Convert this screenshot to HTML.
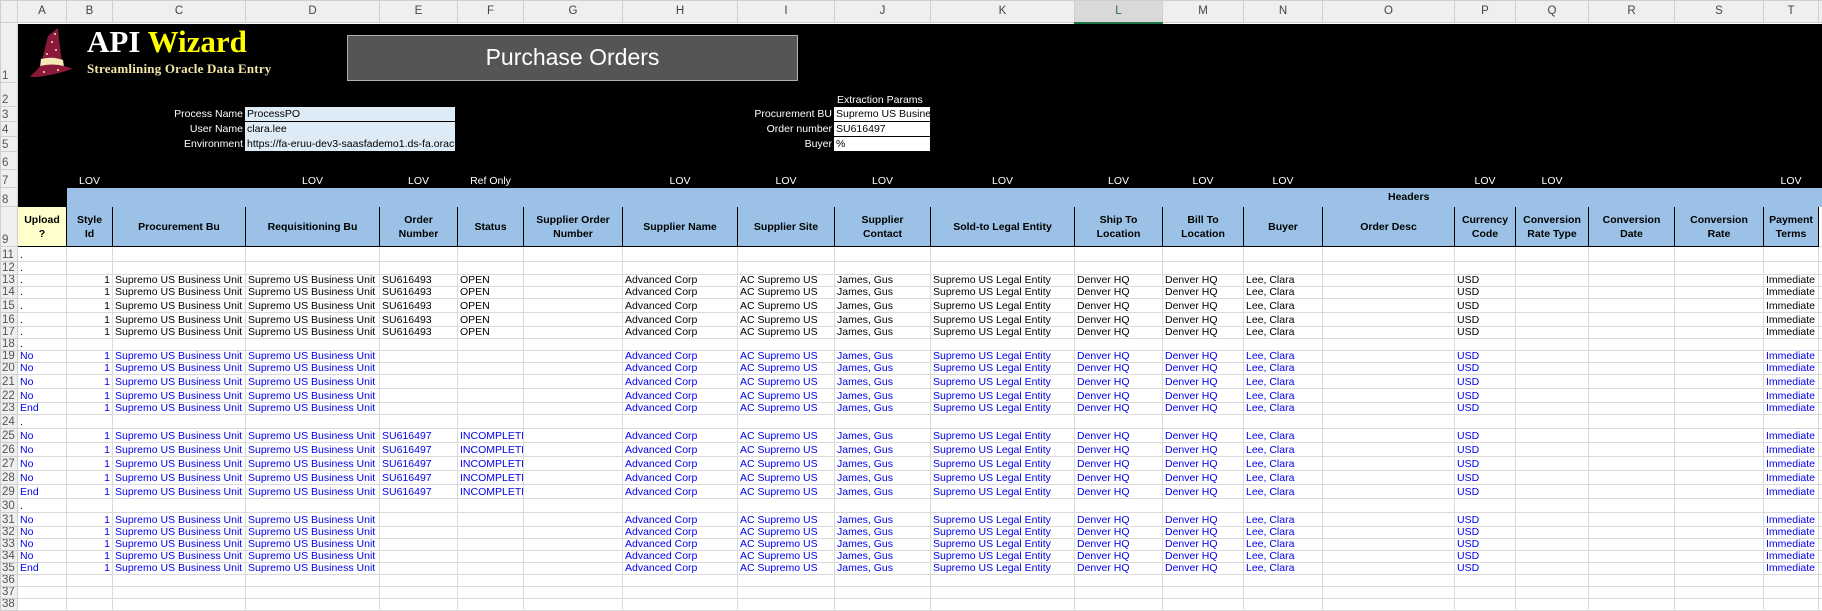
<!DOCTYPE html>
<html><head><meta charset="utf-8"><style>
*{margin:0;padding:0;box-sizing:border-box}
body{width:1822px;height:608px;overflow:hidden;background:#fff;font-family:"Liberation Sans",Arial,sans-serif;font-size:10.5px;position:relative}
table{border-collapse:collapse;table-layout:fixed;position:absolute;left:0;top:0;width:1822px}
td{border:1px solid #dadada;white-space:nowrap;overflow:hidden;padding:0 2px;vertical-align:bottom;line-height:11px;height:12px}
tr.ch td{background:#efefef;color:#444;text-align:center;vertical-align:middle;font-size:11.5px;border-color:#cfcfcf;height:22px}
td.rh{background:#efefef;color:#555;font-size:11.5px;padding:0 0 0 1px;text-align:left;border-color:#cfcfcf;line-height:11px}
td.k{background:#000;border-color:#000;color:#fff}
td.lv{text-align:center;color:#fff;background:#000;border-color:#000}
td.bl{background:#9bc2e6;border-color:#9bc2e6}
tr.h9 td.hd{background:#9bc2e6;border:1px solid #000;text-align:center;vertical-align:middle;font-weight:bold;white-space:nowrap;line-height:14px;font-size:10.5px;color:#000;padding:0}
tr.h9 td.up{background:#ffffcc}
td.r{text-align:right}
tr.bl td{color:#0000ee}
tr.bl td.rh{color:#555}
.ov{position:absolute}
</style></head><body>
<table>
<colgroup><col style="width:17px"><col style="width:49px"><col style="width:46px"><col style="width:133px"><col style="width:134px"><col style="width:78px"><col style="width:66px"><col style="width:99px"><col style="width:115px"><col style="width:97px"><col style="width:96px"><col style="width:144px"><col style="width:88px"><col style="width:81px"><col style="width:79px"><col style="width:132px"><col style="width:61px"><col style="width:73px"><col style="width:86px"><col style="width:89px"><col style="width:55px"><col style="width:4px"></colgroup>
<tr class="ch"><td></td><td>A</td><td>B</td><td>C</td><td>D</td><td>E</td><td>F</td><td>G</td><td>H</td><td>I</td><td>J</td><td>K</td><td style="background:#d9d9d9;border-bottom:2px solid #217346;color:#217346">L</td><td>M</td><td>N</td><td>O</td><td>P</td><td>Q</td><td>R</td><td>S</td><td>T</td><td></td></tr>
<tr><td class="rh" style="height:60px">1</td><td class="k" colspan="21"></td></tr>
<tr><td class="rh" style="height:24px">2</td><td class="k" colspan="21"></td></tr>
<tr><td class="rh" style="height:15px">3</td><td class="k" colspan="21"></td></tr>
<tr><td class="rh" style="height:15px">4</td><td class="k" colspan="21"></td></tr>
<tr><td class="rh" style="height:15px">5</td><td class="k" colspan="21"></td></tr>
<tr><td class="rh" style="height:18px">6</td><td class="k" colspan="21"></td></tr>
<tr><td class="rh" style="height:18px">7</td><td class="k"></td><td class="lv">LOV</td><td class="k"></td><td class="lv">LOV</td><td class="lv">LOV</td><td class="lv">Ref Only</td><td class="k"></td><td class="lv">LOV</td><td class="lv">LOV</td><td class="lv">LOV</td><td class="lv">LOV</td><td class="lv">LOV</td><td class="lv">LOV</td><td class="lv">LOV</td><td class="k"></td><td class="lv">LOV</td><td class="lv">LOV</td><td class="k"></td><td class="k"></td><td class="lv">LOV</td><td class="k"></td></tr>
<tr><td class="rh" style="height:19px">8</td><td class="k"></td><td class="bl" colspan="20" style="font-weight:bold;padding-left:1321px;color:#000;vertical-align:middle">Headers</td></tr>
<tr class="h9"><td class="rh" style="height:40px">9</td><td class="hd up">Upload<br>?</td><td class="hd">Style<br>Id</td><td class="hd">Procurement Bu</td><td class="hd">Requisitioning Bu</td><td class="hd">Order<br>Number</td><td class="hd">Status</td><td class="hd">Supplier Order<br>Number</td><td class="hd">Supplier Name</td><td class="hd">Supplier Site</td><td class="hd">Supplier<br>Contact</td><td class="hd">Sold-to Legal Entity</td><td class="hd">Ship To<br>Location</td><td class="hd">Bill To<br>Location</td><td class="hd">Buyer</td><td class="hd">Order Desc</td><td class="hd">Currency<br>Code</td><td class="hd">Conversion<br>Rate Type</td><td class="hd">Conversion<br>Date</td><td class="hd">Conversion<br>Rate</td><td class="hd">Payment<br>Terms</td><td></td></tr>
<tr><td class="rh" style="height:15px">11</td><td>.</td><td></td><td></td><td></td><td></td><td></td><td></td><td></td><td></td><td></td><td></td><td></td><td></td><td></td><td></td><td></td><td></td><td></td><td></td><td></td><td></td></tr>
<tr><td class="rh" style="height:13px">12</td><td>.</td><td></td><td></td><td></td><td></td><td></td><td></td><td></td><td></td><td></td><td></td><td></td><td></td><td></td><td></td><td></td><td></td><td></td><td></td><td></td><td></td></tr>
<tr><td class="rh">13</td><td>.</td><td class="r">1</td><td>Supremo US Business Unit</td><td>Supremo US Business Unit</td><td>SU616493</td><td>OPEN</td><td></td><td>Advanced Corp</td><td>AC Supremo US</td><td>James, Gus</td><td>Supremo US Legal Entity</td><td>Denver HQ</td><td>Denver HQ</td><td>Lee, Clara</td><td></td><td>USD</td><td></td><td></td><td></td><td>Immediate</td><td></td></tr>
<tr><td class="rh">14</td><td>.</td><td class="r">1</td><td>Supremo US Business Unit</td><td>Supremo US Business Unit</td><td>SU616493</td><td>OPEN</td><td></td><td>Advanced Corp</td><td>AC Supremo US</td><td>James, Gus</td><td>Supremo US Legal Entity</td><td>Denver HQ</td><td>Denver HQ</td><td>Lee, Clara</td><td></td><td>USD</td><td></td><td></td><td></td><td>Immediate</td><td></td></tr>
<tr><td class="rh" style="height:14px">15</td><td>.</td><td class="r">1</td><td>Supremo US Business Unit</td><td>Supremo US Business Unit</td><td>SU616493</td><td>OPEN</td><td></td><td>Advanced Corp</td><td>AC Supremo US</td><td>James, Gus</td><td>Supremo US Legal Entity</td><td>Denver HQ</td><td>Denver HQ</td><td>Lee, Clara</td><td></td><td>USD</td><td></td><td></td><td></td><td>Immediate</td><td></td></tr>
<tr><td class="rh" style="height:14px">16</td><td>.</td><td class="r">1</td><td>Supremo US Business Unit</td><td>Supremo US Business Unit</td><td>SU616493</td><td>OPEN</td><td></td><td>Advanced Corp</td><td>AC Supremo US</td><td>James, Gus</td><td>Supremo US Legal Entity</td><td>Denver HQ</td><td>Denver HQ</td><td>Lee, Clara</td><td></td><td>USD</td><td></td><td></td><td></td><td>Immediate</td><td></td></tr>
<tr><td class="rh">17</td><td>.</td><td class="r">1</td><td>Supremo US Business Unit</td><td>Supremo US Business Unit</td><td>SU616493</td><td>OPEN</td><td></td><td>Advanced Corp</td><td>AC Supremo US</td><td>James, Gus</td><td>Supremo US Legal Entity</td><td>Denver HQ</td><td>Denver HQ</td><td>Lee, Clara</td><td></td><td>USD</td><td></td><td></td><td></td><td>Immediate</td><td></td></tr>
<tr><td class="rh">18</td><td>.</td><td></td><td></td><td></td><td></td><td></td><td></td><td></td><td></td><td></td><td></td><td></td><td></td><td></td><td></td><td></td><td></td><td></td><td></td><td></td><td></td></tr>
<tr class="bl"><td class="rh">19</td><td>No</td><td class="r">1</td><td>Supremo US Business Unit</td><td>Supremo US Business Unit</td><td></td><td></td><td></td><td>Advanced Corp</td><td>AC Supremo US</td><td>James, Gus</td><td>Supremo US Legal Entity</td><td>Denver HQ</td><td>Denver HQ</td><td>Lee, Clara</td><td></td><td>USD</td><td></td><td></td><td></td><td>Immediate</td><td></td></tr>
<tr class="bl"><td class="rh">20</td><td>No</td><td class="r">1</td><td>Supremo US Business Unit</td><td>Supremo US Business Unit</td><td></td><td></td><td></td><td>Advanced Corp</td><td>AC Supremo US</td><td>James, Gus</td><td>Supremo US Legal Entity</td><td>Denver HQ</td><td>Denver HQ</td><td>Lee, Clara</td><td></td><td>USD</td><td></td><td></td><td></td><td>Immediate</td><td></td></tr>
<tr class="bl"><td class="rh" style="height:14px">21</td><td>No</td><td class="r">1</td><td>Supremo US Business Unit</td><td>Supremo US Business Unit</td><td></td><td></td><td></td><td>Advanced Corp</td><td>AC Supremo US</td><td>James, Gus</td><td>Supremo US Legal Entity</td><td>Denver HQ</td><td>Denver HQ</td><td>Lee, Clara</td><td></td><td>USD</td><td></td><td></td><td></td><td>Immediate</td><td></td></tr>
<tr class="bl"><td class="rh" style="height:14px">22</td><td>No</td><td class="r">1</td><td>Supremo US Business Unit</td><td>Supremo US Business Unit</td><td></td><td></td><td></td><td>Advanced Corp</td><td>AC Supremo US</td><td>James, Gus</td><td>Supremo US Legal Entity</td><td>Denver HQ</td><td>Denver HQ</td><td>Lee, Clara</td><td></td><td>USD</td><td></td><td></td><td></td><td>Immediate</td><td></td></tr>
<tr class="bl"><td class="rh">23</td><td>End</td><td class="r">1</td><td>Supremo US Business Unit</td><td>Supremo US Business Unit</td><td></td><td></td><td></td><td>Advanced Corp</td><td>AC Supremo US</td><td>James, Gus</td><td>Supremo US Legal Entity</td><td>Denver HQ</td><td>Denver HQ</td><td>Lee, Clara</td><td></td><td>USD</td><td></td><td></td><td></td><td>Immediate</td><td></td></tr>
<tr><td class="rh" style="height:14px">24</td><td>.</td><td></td><td></td><td></td><td></td><td></td><td></td><td></td><td></td><td></td><td></td><td></td><td></td><td></td><td></td><td></td><td></td><td></td><td></td><td></td><td></td></tr>
<tr class="bl"><td class="rh" style="height:14px">25</td><td>No</td><td class="r">1</td><td>Supremo US Business Unit</td><td>Supremo US Business Unit</td><td>SU616497</td><td>INCOMPLETE</td><td></td><td>Advanced Corp</td><td>AC Supremo US</td><td>James, Gus</td><td>Supremo US Legal Entity</td><td>Denver HQ</td><td>Denver HQ</td><td>Lee, Clara</td><td></td><td>USD</td><td></td><td></td><td></td><td>Immediate</td><td></td></tr>
<tr class="bl"><td class="rh" style="height:14px">26</td><td>No</td><td class="r">1</td><td>Supremo US Business Unit</td><td>Supremo US Business Unit</td><td>SU616497</td><td>INCOMPLETE</td><td></td><td>Advanced Corp</td><td>AC Supremo US</td><td>James, Gus</td><td>Supremo US Legal Entity</td><td>Denver HQ</td><td>Denver HQ</td><td>Lee, Clara</td><td></td><td>USD</td><td></td><td></td><td></td><td>Immediate</td><td></td></tr>
<tr class="bl"><td class="rh" style="height:14px">27</td><td>No</td><td class="r">1</td><td>Supremo US Business Unit</td><td>Supremo US Business Unit</td><td>SU616497</td><td>INCOMPLETE</td><td></td><td>Advanced Corp</td><td>AC Supremo US</td><td>James, Gus</td><td>Supremo US Legal Entity</td><td>Denver HQ</td><td>Denver HQ</td><td>Lee, Clara</td><td></td><td>USD</td><td></td><td></td><td></td><td>Immediate</td><td></td></tr>
<tr class="bl"><td class="rh" style="height:14px">28</td><td>No</td><td class="r">1</td><td>Supremo US Business Unit</td><td>Supremo US Business Unit</td><td>SU616497</td><td>INCOMPLETE</td><td></td><td>Advanced Corp</td><td>AC Supremo US</td><td>James, Gus</td><td>Supremo US Legal Entity</td><td>Denver HQ</td><td>Denver HQ</td><td>Lee, Clara</td><td></td><td>USD</td><td></td><td></td><td></td><td>Immediate</td><td></td></tr>
<tr class="bl"><td class="rh" style="height:14px">29</td><td>End</td><td class="r">1</td><td>Supremo US Business Unit</td><td>Supremo US Business Unit</td><td>SU616497</td><td>INCOMPLETE</td><td></td><td>Advanced Corp</td><td>AC Supremo US</td><td>James, Gus</td><td>Supremo US Legal Entity</td><td>Denver HQ</td><td>Denver HQ</td><td>Lee, Clara</td><td></td><td>USD</td><td></td><td></td><td></td><td>Immediate</td><td></td></tr>
<tr><td class="rh" style="height:14px">30</td><td>.</td><td></td><td></td><td></td><td></td><td></td><td></td><td></td><td></td><td></td><td></td><td></td><td></td><td></td><td></td><td></td><td></td><td></td><td></td><td></td><td></td></tr>
<tr class="bl"><td class="rh" style="height:14px">31</td><td>No</td><td class="r">1</td><td>Supremo US Business Unit</td><td>Supremo US Business Unit</td><td></td><td></td><td></td><td>Advanced Corp</td><td>AC Supremo US</td><td>James, Gus</td><td>Supremo US Legal Entity</td><td>Denver HQ</td><td>Denver HQ</td><td>Lee, Clara</td><td></td><td>USD</td><td></td><td></td><td></td><td>Immediate</td><td></td></tr>
<tr class="bl"><td class="rh">32</td><td>No</td><td class="r">1</td><td>Supremo US Business Unit</td><td>Supremo US Business Unit</td><td></td><td></td><td></td><td>Advanced Corp</td><td>AC Supremo US</td><td>James, Gus</td><td>Supremo US Legal Entity</td><td>Denver HQ</td><td>Denver HQ</td><td>Lee, Clara</td><td></td><td>USD</td><td></td><td></td><td></td><td>Immediate</td><td></td></tr>
<tr class="bl"><td class="rh">33</td><td>No</td><td class="r">1</td><td>Supremo US Business Unit</td><td>Supremo US Business Unit</td><td></td><td></td><td></td><td>Advanced Corp</td><td>AC Supremo US</td><td>James, Gus</td><td>Supremo US Legal Entity</td><td>Denver HQ</td><td>Denver HQ</td><td>Lee, Clara</td><td></td><td>USD</td><td></td><td></td><td></td><td>Immediate</td><td></td></tr>
<tr class="bl"><td class="rh">34</td><td>No</td><td class="r">1</td><td>Supremo US Business Unit</td><td>Supremo US Business Unit</td><td></td><td></td><td></td><td>Advanced Corp</td><td>AC Supremo US</td><td>James, Gus</td><td>Supremo US Legal Entity</td><td>Denver HQ</td><td>Denver HQ</td><td>Lee, Clara</td><td></td><td>USD</td><td></td><td></td><td></td><td>Immediate</td><td></td></tr>
<tr class="bl"><td class="rh">35</td><td>End</td><td class="r">1</td><td>Supremo US Business Unit</td><td>Supremo US Business Unit</td><td></td><td></td><td></td><td>Advanced Corp</td><td>AC Supremo US</td><td>James, Gus</td><td>Supremo US Legal Entity</td><td>Denver HQ</td><td>Denver HQ</td><td>Lee, Clara</td><td></td><td>USD</td><td></td><td></td><td></td><td>Immediate</td><td></td></tr>
<tr><td class="rh">36</td><td></td><td></td><td></td><td></td><td></td><td></td><td></td><td></td><td></td><td></td><td></td><td></td><td></td><td></td><td></td><td></td><td></td><td></td><td></td><td></td><td></td></tr>
<tr><td class="rh">37</td><td></td><td></td><td></td><td></td><td></td><td></td><td></td><td></td><td></td><td></td><td></td><td></td><td></td><td></td><td></td><td></td><td></td><td></td><td></td><td></td><td></td></tr>
<tr><td class="rh">38</td><td></td><td></td><td></td><td></td><td></td><td></td><td></td><td></td><td></td><td></td><td></td><td></td><td></td><td></td><td></td><td></td><td></td><td></td><td></td><td></td><td></td></tr>
</table>

<svg class="ov" style="left:28px;top:26px" width="50" height="56" viewBox="0 0 50 56">
<path d="M30 2 L20 10 L14 34 L34 36 L31 14 Z" fill="#8b1a3a"/>
<path d="M13 33 Q24 30 35 34 L36 41 Q24 38 12 41 Z" fill="#f5e9b8"/>
<path d="M12 40 Q24 37 36 40 Q44 42 44 43 Q30 48 16 50 Q6 52 2 50 Q8 46 12 40 Z" fill="#8b1a3a"/>
<g fill="#f5e9b8"><circle cx="24" cy="16" r="1"/><circle cx="28" cy="24" r="1"/><circle cx="19" cy="28" r="1"/><circle cx="27" cy="8" r="1"/><circle cx="16" cy="46" r="1"/><circle cx="30" cy="44" r="1"/></g>
</svg>
<div class="ov" style="left:87px;top:25px;font-family:'Liberation Serif',serif;font-size:31px;font-weight:bold;color:#fff;line-height:34px">API <span style="color:#ffff00">Wizard</span></div>
<div class="ov" style="left:87px;top:61px;font-family:'Liberation Serif',serif;font-size:13px;font-weight:bold;color:#f3e6a6;line-height:15px;letter-spacing:0.2px">Streamlining Oracle Data Entry</div>
<div class="ov" style="left:347px;top:35px;width:451px;height:46px;background:#555;border:1.5px solid #b0b0b0;color:#fff;font-size:23px;text-align:center;line-height:43px">Purchase Orders</div>

<div class="ov" style="left:112px;top:107px;width:131px;text-align:right;color:#fff;line-height:15px">Process Name<br>User Name<br>Environment</div>
<div class="ov" style="left:245px;top:107px;width:210px;height:14px;background:#ddebf7;line-height:14px;padding-left:2px">ProcessPO</div>
<div class="ov" style="left:245px;top:122px;width:210px;height:29px;background:#ddebf7;line-height:14.5px;padding-left:2px;overflow:hidden;white-space:nowrap">clara.lee<br>https://fa-eruu-dev3-saasfademo1.ds-fa.oracle.com</div>
<div class="ov" style="left:837px;top:93px;color:#fff;line-height:14px">Extraction Params</div>
<div class="ov" style="left:700px;top:107px;width:132px;text-align:right;color:#fff;line-height:15px">Procurement BU<br>Order number<br>Buyer</div>
<div class="ov" style="left:834px;top:107px;width:96px;height:14px;background:#fff;line-height:14px;padding-left:2px;overflow:hidden;white-space:nowrap">Supremo US Business Unit</div>
<div class="ov" style="left:834px;top:122px;width:96px;height:14px;background:#fff;line-height:14px;padding-left:2px">SU616497</div>
<div class="ov" style="left:834px;top:137px;width:96px;height:14px;background:#fff;line-height:14px;padding-left:2px">%</div>
</body></html>
